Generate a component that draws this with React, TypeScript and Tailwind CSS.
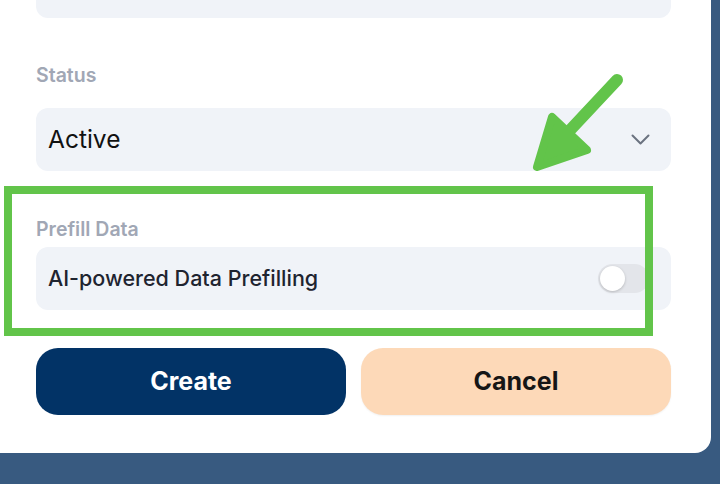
export default function App() {
  return (
    <div
      className="relative w-[720px] h-[484px] overflow-hidden bg-[#385a80]"
      style={{ fontFamily: "Inter, 'Noto Sans', sans-serif" }}
    >
      {/* card */}
      <div className="flex flex-col w-[711px] bg-white rounded-br-[16px] pl-[36px] pr-[40px] pb-[38px]">
        {/* field cut off at the top */}
        <div className="-mt-[45px] h-[63px] rounded-[12px] bg-[#f0f3f8]" />

        <label className="mt-[45px] h-[24px] leading-[24px] text-[19.5px] font-semibold text-[#a1a7b5]">
          Status
        </label>
        <div className="mt-[21px] h-[63px] rounded-[12px] bg-[#f0f3f8] flex items-center justify-between pl-[12px] pr-[21px]">
          <span className="text-[24.5px] text-[#111111]">Active</span>
          <svg width="19" height="11" viewBox="0 0 19 11" fill="none">
            <path
              d="M1.5 1.5l8 8 8-8"
              stroke="#6b7280"
              strokeWidth="2"
              strokeLinecap="round"
              strokeLinejoin="round"
            />
          </svg>
        </div>

        <label className="mt-[46px] h-[24px] leading-[24px] text-[19.5px] font-semibold text-[#a1a7b5]">
          Prefill Data
        </label>
        <div className="mt-[6px] h-[63px] rounded-[12px] bg-[#f0f3f8] flex items-center justify-between pl-[12px] pr-[22px]">
          <span className="text-[21.5px] font-medium text-[#1f2430]">
            AI-powered Data Prefilling
          </span>
          <button className="relative w-[51px] h-[29px] rounded-full bg-[#e3e5ea]">
            <span className="absolute left-[2px] top-[2px] w-[25px] h-[25px] rounded-full bg-white shadow-[0_1px_3px_rgba(0,0,0,0.2)]" />
          </button>
        </div>

        <div className="mt-[38px] grid grid-cols-2 gap-[15px]">
          <button className="h-[67px] rounded-[22px] bg-[#023366] text-white text-[25px] font-bold">
            Create
          </button>
          <button className="h-[67px] rounded-[22px] bg-[#fdd9b8] text-[#161616] text-[25px] font-bold shadow-[0_1px_2px_rgba(0,0,0,0.06)]">
            Cancel
          </button>
        </div>
      </div>

      {/* annotation: highlight box */}
      <div className="absolute left-[4px] top-[186px] w-[649px] h-[150px] border-[8px] border-[#62c44a] pointer-events-none" />

      {/* annotation: arrow */}
      <svg
        className="absolute left-0 top-0 pointer-events-none"
        width="720"
        height="484"
        viewBox="0 0 720 484"
      >
        <line
          x1="617"
          y1="80"
          x2="558"
          y2="143"
          stroke="#62c44a"
          strokeWidth="12"
          strokeLinecap="round"
        />
        <path
          d="M552 117 L537 167 L587 150 Z"
          fill="#62c44a"
          stroke="#62c44a"
          strokeWidth="8"
          strokeLinejoin="round"
          strokeLinecap="round"
        />
      </svg>
    </div>
  );
}
